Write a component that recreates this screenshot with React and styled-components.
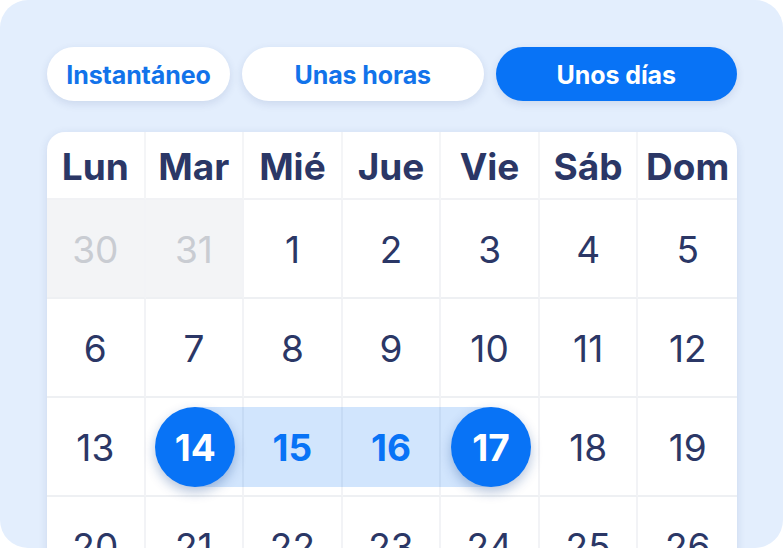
import React from "react";
import styled, { createGlobalStyle, css } from "styled-components";

const Global = createGlobalStyle`
  html, body { margin: 0; padding: 0; background: #ffffff; }
  body { font-family: Inter, "Noto Sans", sans-serif; }
  * { box-sizing: border-box; }
`;

const Panel = styled.div`
  width: 783px;
  height: 548px;
  border-radius: 28px;
  background: #e3eefd;
  overflow: hidden;
  padding: 47px 46px 0 47px;
`;

const Tabs = styled.div`
  display: grid;
  grid-template-columns: 183px 1fr 1fr;
  gap: 12px;
  height: 54px;
`;

const Tab = styled.div`
  display: flex;
  align-items: center;
  justify-content: center;
  padding-top: 1px;
  border-radius: 27px;
  font-size: 25px;
  font-weight: 700;
  letter-spacing: -0.1px;
  background: ${(p) => (p.$active ? "#0873f6" : "#ffffff")};
  color: ${(p) => (p.$active ? "#ffffff" : "#1273ea")};
  box-shadow: 0 3px 8px rgba(30, 60, 120, 0.12);
`;

const Card = styled.div`
  margin-top: 31px;
  background: #ffffff;
  border-radius: 18px;
  box-shadow: 0 2px 10px rgba(30, 60, 120, 0.12);
  display: grid;
  grid-template-columns: repeat(7, 1fr);
  grid-auto-rows: 99px;
  grid-template-rows: 68px;
  overflow: hidden;
`;

const Head = styled.div`
  display: flex;
  align-items: center;
  justify-content: center;
  padding-top: 2px;
  font-size: 37px;
  font-weight: 700;
  color: #2b3766;
  border-right: 2px solid #f4f5f7;
  border-bottom: 2px solid #f1f2f5;
  &:nth-child(7n) { border-right: none; }
`;

const Cell = styled.div`
  position: relative;
  display: flex;
  align-items: center;
  justify-content: center;
  padding-top: 2px;
  font-size: 37px;
  font-weight: 400;
  color: #2b3766;
  border-right: 2px solid #f2f3f6;
  border-bottom: 2px solid #eef0f3;
  &:nth-child(7n) { border-right: none; }
  ${(p) =>
    p.$muted &&
    css`
      background: #f3f4f6;
      color: #c9ccd2;
    `}
  ${(p) =>
    p.$band &&
    css`
      &::before {
        content: "";
        position: absolute;
        top: 9px;
        height: 80px;
        left: ${p.$band === "start" ? "50%" : "0"};
        right: ${p.$band === "end" ? "50%" : "-2px"};
        background: rgba(8, 115, 246, 0.19);
      }
    `}
  ${(p) =>
    p.$inRange &&
    css`
      color: #0873f6;
      font-weight: 700;
    `}
`;

const Label = styled.span`
  position: relative;
  z-index: 1;
`;

const Circle = styled.span`
  position: relative;
  z-index: 2;
  width: 80px;
  height: 80px;
  margin-top: -2px;
  margin-left: 3px;
  padding-top: 2px;
  border-radius: 50%;
  background: #0873f6;
  color: #ffffff;
  font-weight: 700;
  display: flex;
  align-items: center;
  justify-content: center;
  box-shadow: 0 5px 12px rgba(10, 60, 140, 0.3);
`;

const days = ["Lun", "Mar", "Mié", "Jue", "Vie", "Sáb", "Dom"];
const cells = [
  30, 31, 1, 2, 3, 4, 5,
  6, 7, 8, 9, 10, 11, 12,
  13, 14, 15, 16, 17, 18, 19,
  20, 21, 22, 23, 24, 25, 26,
];

export default function App() {
  return (
    <>
      <Global />
      <Panel>
        <Tabs>
          <Tab>Instantáneo</Tab>
          <Tab>Unas horas</Tab>
          <Tab $active>Unos días</Tab>
        </Tabs>
        <Card>
          {days.map((d) => (
            <Head key={d}>{d}</Head>
          ))}
          {cells.map((n, i) => {
            const muted = i < 2;
            const start = i === 15;
            const end = i === 18;
            const mid = i === 16 || i === 17;
            const band = start ? "start" : end ? "end" : mid ? "mid" : null;
            return (
              <Cell key={i} $muted={muted} $band={band} $inRange={mid}>
                {start || end ? <Circle>{n}</Circle> : <Label>{n}</Label>}
              </Cell>
            );
          })}
        </Card>
      </Panel>
    </>
  );
}
